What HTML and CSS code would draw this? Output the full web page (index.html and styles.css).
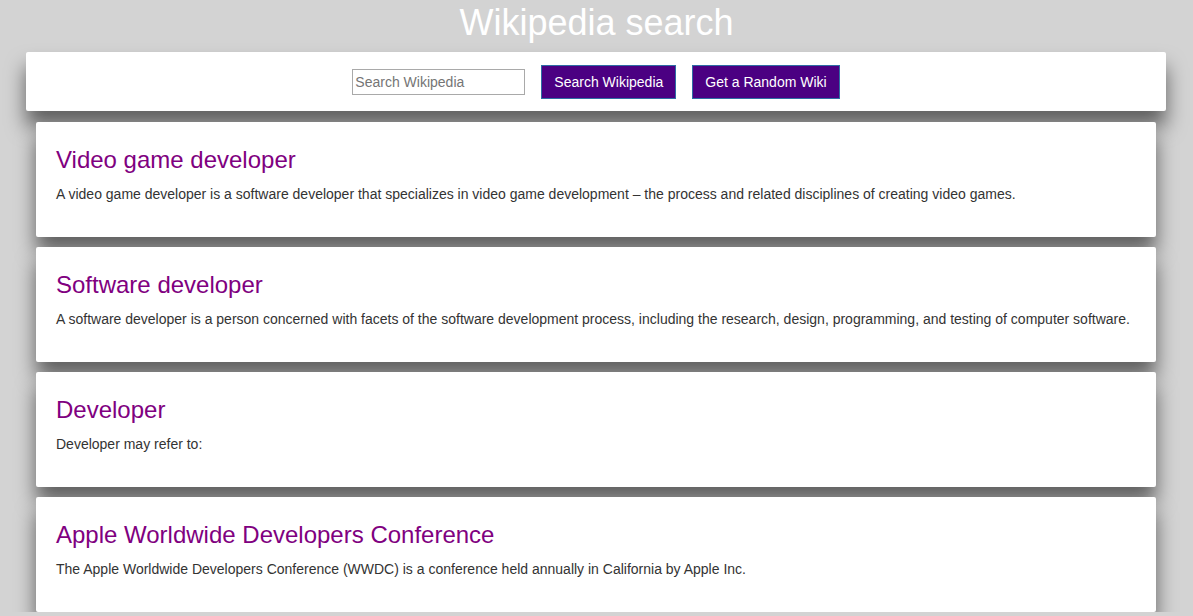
FILE: index.html
```html
<!DOCTYPE html>
<html>
<head>
<meta charset="utf-8">
<link rel="stylesheet" href="styles.css">
</head>
<body>
<h1 class="page-title">Wikipedia search</h1>
<div class="container">
  <div class="search-bar">
    <input class="search-input" type="text" placeholder="Search Wikipedia">
    <button class="btn">Search Wikipedia</button>
    <button class="btn">Get a Random Wiki</button>
  </div>
  <div class="results">
    <div class="card">
      <h2 class="card-title">Video game developer</h2>
      <p class="card-text">A video game developer is a software developer that specializes in video game development – the process and related disciplines of creating video games.</p>
    </div>
    <div class="card">
      <h2 class="card-title">Software developer</h2>
      <p class="card-text">A software developer is a person concerned with facets of the software development process, including the research, design, programming, and testing of computer software.</p>
    </div>
    <div class="card">
      <h2 class="card-title">Developer</h2>
      <p class="card-text">Developer may refer to:</p>
    </div>
    <div class="card">
      <h2 class="card-title">Apple Worldwide Developers Conference</h2>
      <p class="card-text">The Apple Worldwide Developers Conference (WWDC) is a conference held annually in California by Apple Inc.</p>
    </div>
  </div>
</div>
</body>
</html>
```

FILE: styles.css
```css
html, body {
  margin: 0;
  padding: 0;
}
body {
  background: #d3d3d3;
  font-family: "Liberation Sans", Arial, sans-serif;
  color: #333;
  overflow: hidden;
}
.page-title {
  margin: 0;
  padding-top: 2px;
  height: 50px;
  font-size: 36px;
  line-height: 42px;
  font-weight: normal;
  color: #fff;
  text-align: center;
}
.container {
  width: 1140px;
  margin-left: calc(50% - 570.5px);
}
.search-bar {
  background: #fff;
  border-radius: 2px;
  height: 59px;
  display: flex;
  align-items: center;
  justify-content: center;
  gap: 16px;
  box-shadow: 0 15px 20px rgba(0, 0, 0, 0.55);
}
.search-input {
  width: 173px;
  height: 26px;
  box-sizing: border-box;
  border: 1px solid #a9a9a9;
  padding: 1px 2px;
  font-family: "Liberation Sans", Arial, sans-serif;
  font-size: 14px;
  color: #333;
  margin: 0;
}
.search-input::placeholder {
  color: #757575;
}
.btn {
  height: 34px;
  padding: 0 12px;
  background: #4b0082;
  border: 1px solid #2e6da4;
  color: #fff;
  font-family: "Liberation Sans", Arial, sans-serif;
  font-size: 14px;
  margin: 0;
}
.results {
  padding: 11px 10px 0;
  display: flex;
  flex-direction: column;
  gap: 10px;
}
.card {
  background: #fff;
  border-radius: 2px;
  height: 115px;
  box-sizing: border-box;
  padding: 25px 20px 0;
  box-shadow: 0 15px 20px rgba(0, 0, 0, 0.55);
}
.card-title {
  margin: 0 0 11px;
  font-size: 24px;
  line-height: 26px;
  font-weight: normal;
  color: #800080;
}
.card-text {
  margin: 0;
  font-size: 14px;
  line-height: 20px;
  color: #333;
}
```
